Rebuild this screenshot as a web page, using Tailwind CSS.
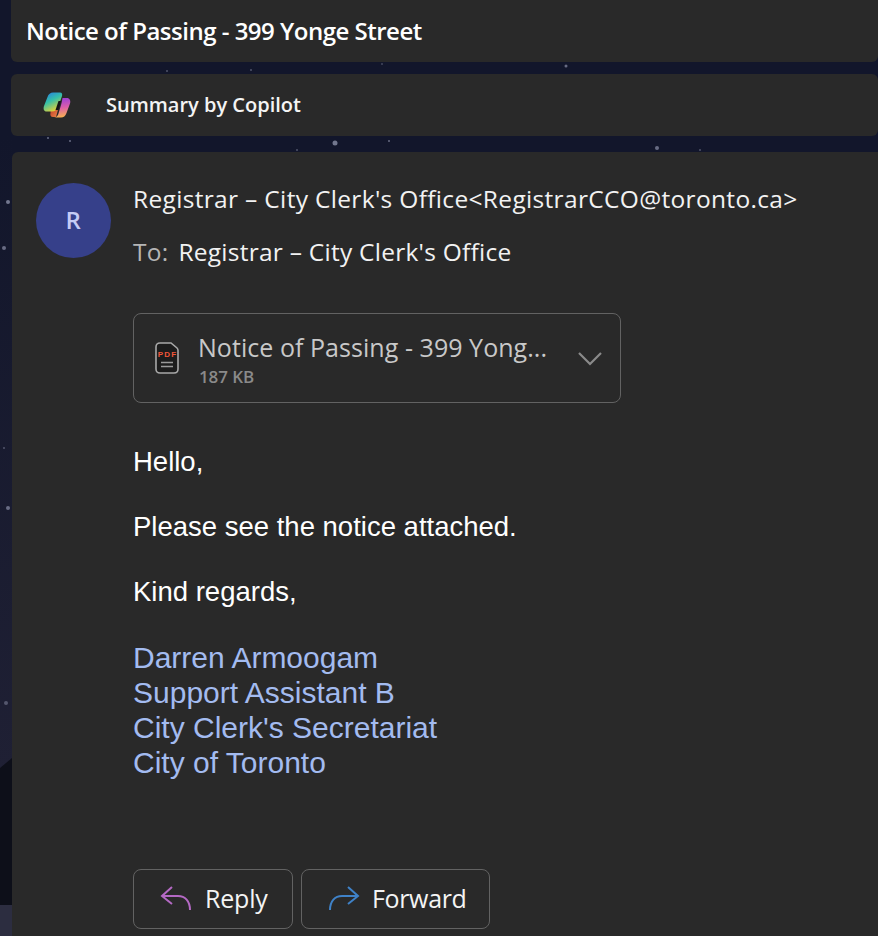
<!DOCTYPE html>
<html lang="en">
<head>
  <meta charset="UTF-8">
  <meta name="viewport" content="width=device-width, initial-scale=1.0">
  <title>Notice of Passing</title>
  <script src="https://cdn.jsdelivr.net/npm/@tailwindcss/browser@4"></script>
</head>
<body class="bg-[#12162b] font-['Open_Sans',sans-serif]">
  <div class="relative w-[878px] h-[936px] overflow-hidden">
    <!-- wallpaper -->
    <svg class="absolute left-0 top-0" width="878" height="936" viewBox="0 0 878 936">
      <defs>
        <linearGradient id="wall" x1="0" y1="0" x2="0" y2="1">
          <stop offset="0" stop-color="#12162b"/><stop offset="1" stop-color="#1f2034"/>
        </linearGradient>
      </defs>
      <rect x="0" y="136" width="12" height="634" fill="url(#wall)"/>
      <path d="M0 768 L12 758 L12 905 L0 905 Z" fill="#0d0f19"/>
      <rect x="0" y="905" width="12" height="31" fill="#2c2d40"/>
      <g fill="#8b90a8">
        <circle cx="167" cy="71" r="1" opacity="0.5"/><circle cx="251" cy="70" r="1" opacity="0.5"/><circle cx="382" cy="64" r="1" opacity="0.4"/>
        <circle cx="566" cy="66" r="1.5" opacity="0.7"/><circle cx="48" cy="138" r="1" opacity="0.7"/><circle cx="70" cy="141" r="1" opacity="0.7"/>
        <circle cx="335" cy="143" r="2.5" opacity="0.8"/><circle cx="389" cy="141" r="1" opacity="0.7"/><circle cx="297" cy="150" r="1" opacity="0.5"/>
        <circle cx="657" cy="148" r="2" opacity="0.7"/><circle cx="700" cy="150" r="1" opacity="0.5"/><circle cx="8" cy="202" r="2" opacity="0.8"/>
        <circle cx="4" cy="248" r="2" opacity="0.7"/><circle cx="8" cy="508" r="2" opacity="0.7"/><circle cx="4" cy="448" r="1" opacity="0.5"/>
        <circle cx="6" cy="703" r="2" opacity="0.5"/>
      </g>
    </svg>

    <div class="relative pl-[11px] h-full flex flex-col">
      <div class="h-[62px] shrink-0 bg-[#292929] rounded-b-md flex items-center pl-[15px]">
        <h1 class="text-[24px] font-semibold text-white tracking-[-0.5px]">Notice of Passing - 399 Yonge Street</h1>
      </div>

      <div class="mt-[12px] h-[62px] shrink-0 bg-[#292929] rounded-md flex items-center">
        <svg class="ml-[32px]" width="28" height="26" viewBox="0 0 28 26">
          <defs>
            <linearGradient id="cpA" x1="0" y1="0" x2="0.5" y2="1">
              <stop offset="0" stop-color="#2477ea"/><stop offset="0.5" stop-color="#35c0a8"/><stop offset="1" stop-color="#e0d23a"/>
            </linearGradient>
            <linearGradient id="cpB" x1="0.4" y1="0" x2="0.5" y2="1">
              <stop offset="0" stop-color="#9b3fd8"/><stop offset="0.5" stop-color="#dc5fa8"/><stop offset="1" stop-color="#f9b24e"/>
            </linearGradient>
            <linearGradient id="cpC" x1="0" y1="0" x2="1" y2="1">
              <stop offset="0" stop-color="#b83426"/><stop offset="1" stop-color="#f08a48"/>
            </linearGradient>
          </defs>
          <path d="M8 14 H16 L13 25 H10 C7.5 25 7 23 7.5 21 Z" fill="url(#cpC)"/>
          <path d="M10 0.5 H17 C19 0.5 19.5 2 19 4 L15.5 14 C14.5 17.5 12 19.5 9 19.5 H3.5 C1 19.5 0 17 1 14 L4.5 5 C5.5 2 7.5 0.5 10 0.5 Z" fill="url(#cpA)"/>
          <path d="M19.5 6 H24 C26.5 6 28 8.5 27 11.5 L23.5 21 C22.5 24 20.5 25.5 18 25.5 H11 C13.5 25.5 15 23.5 15.5 21.5 L18 13 C18.5 11 19.2 8.5 19.5 6 Z" fill="url(#cpB)"/>
          <path d="M15.5 9 L18 9 L15.5 18 L12.5 18 Z" fill="#161616"/>
        </svg>
        <span class="ml-[35px] text-[20px] font-semibold text-[#f4f4f4]">Summary by Copilot</span>
      </div>

      <div class="ml-[1px] mt-[16px] flex-1 bg-[#292929] rounded-tl-md pt-[31px] pl-[24px] flex gap-[22.5px]">
        <div class="w-[74.5px] h-[74.5px] shrink-0 rounded-full bg-[#36408a] flex items-center justify-center text-[#c5cbf5] text-[24px] font-semibold">R</div>

        <div class="min-w-0 flex-1">
          <p class="h-[32px] leading-[32px] text-[24.5px] text-[#f2f2f2] tracking-[0.33px] whitespace-nowrap">Registrar – City Clerk's Office&lt;RegistrarCCO@toronto.ca&gt;</p>
          <p class="mt-[21px] h-[32px] leading-[32px] text-[24.5px] tracking-[0.25px] text-[#f2f2f2]"><span class="text-[#b5b5b5]">To:</span><span class="ml-[10px]">Registrar – City Clerk's Office</span></p>

          <div class="mt-[45px] w-[487.5px] h-[90px] rounded-lg border border-[#626262] flex items-center pl-[21px]">
            <svg width="24" height="32" viewBox="0 0 24 32" fill="none">
              <path d="M5 1 H16 L22 6 C22.7 6.7 23 7.5 23 8.5 V27 C23 29.5 21.5 31 19 31 H5 C2.5 31 1 29.5 1 27 V5 C1 2.5 2.5 1 5 1 Z" fill="#1c1c1c" stroke="#a8a8a8" stroke-width="1.6"/>
              <text x="12.5" y="15" text-anchor="middle" font-family="'Liberation Sans',sans-serif" font-size="8" font-weight="700" letter-spacing="1.2" fill="#f0563a">PDF</text>
              <path d="M6 20.5 H18 M6 24.5 H18" stroke="#9a9a9a" stroke-width="1.5"/>
            </svg>
            <div class="ml-[19px] w-[360px] pt-[3px]">
              <p class="text-[25px] leading-[34px] text-[#c8c8c8] tracking-[0.05px] whitespace-nowrap">Notice of Passing - 399 Yong...</p>
              <p class="pl-[1px] text-[17px] leading-[26px] font-semibold text-[#8a8a8a] tracking-[-0.1px]">187 KB</p>
            </div>
            <svg class="ml-[19px]" width="26" height="16" viewBox="0 0 26 16" fill="none">
              <path d="M2 3 L13 14 L24 3" stroke="#8a8a8a" stroke-width="2.2"/>
            </svg>
          </div>

          <div class="mt-[41px] font-['Liberation_Sans',sans-serif] text-[27.5px] leading-[35px] text-white">
            <p>Hello,</p>
            <p class="mt-[30px]">Please see the notice attached.</p>
            <p class="mt-[30px]">Kind regards,</p>
            <div class="mt-[31px] text-[30px] text-[#a3bbf0]">
              <p>Darren Armoogam</p>
              <p>Support Assistant B</p>
              <p>City Clerk's Secretariat</p>
              <p>City of Toronto</p>
            </div>
          </div>

          <div class="mt-[89px] flex gap-[8px]">
            <button class="w-[160px] h-[60px] rounded-lg border border-[#626262] flex items-center pl-[26px] text-[25px] text-[#f4f4f4] tracking-[-0.2px]">
              <svg width="32" height="26" viewBox="0 0 32 26" fill="none">
                <path d="M12 1 L2 10 L12 18 M2 10 H18 C25 10 30 15 30 24" stroke="#b469c4" stroke-width="2"/>
              </svg>
              <span class="ml-[13px]">Reply</span>
            </button>
            <button class="w-[189px] h-[60px] rounded-lg border border-[#626262] flex items-center pl-[26px] text-[25px] text-[#f4f4f4] tracking-[-0.35px]">
              <svg width="32" height="26" viewBox="0 0 32 26" fill="none">
                <path d="M20 1 L30 10 L20 18 M30 10 H14 C7 10 2 15 2 24" stroke="#3f82c8" stroke-width="2"/>
              </svg>
              <span class="ml-[12px]">Forward</span>
            </button>
          </div>
        </div>
      </div>
    </div>
  </div>
</body>
</html>
